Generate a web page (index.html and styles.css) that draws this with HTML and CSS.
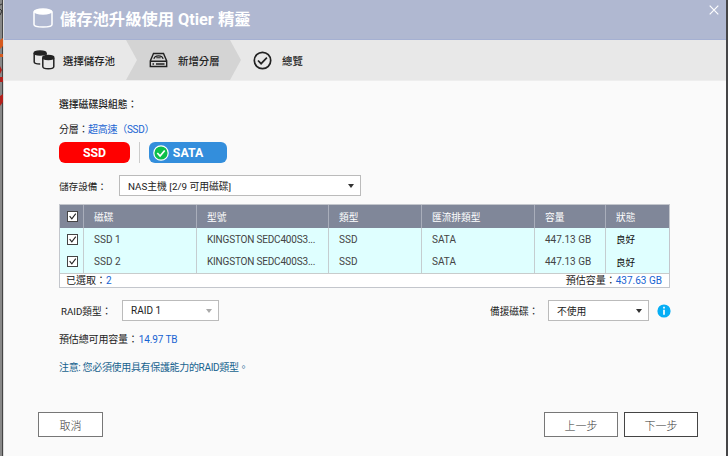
FILE: index.html
```
<!DOCTYPE html>
<html lang="zh-Hant">
<head>
    <meta charset="UTF-8">
    <meta name="viewport" content="width=device-width, initial-scale=1.0">
    <title>儲存池升級使用 Qtier 精靈</title>
    <link rel="stylesheet" href="styles.css">
</head>
<body>
<div class="backdrop">
    <svg class="backdrop-left" width="4" height="456" viewBox="0 0 4 456">
        <path d="M0 5 L2 4 M0 9 L2 11 L0 15" stroke="#333" fill="none"/>
        <path d="M0 40 L3 38 V46 L0 49z M0 54h3v3h-3z" fill="#d65a1e"/>
        <path d="M0 66 L2 70 L0 74z M0 77h3v5h-3z M0 96 L3 94 V102 L0 106z" fill="#b3201c"/>
    </svg>
    <div class="dialog">
        <header class="titlebar">
            <svg class="title-icon" width="22" height="22" viewBox="0 0 22 22">
                <path d="M2 4.500V17.500C2 19 6 20 11 20S20 19 20 17.500V4.500" fill="none" stroke="#fff" stroke-width="1.500"/>
                <ellipse cx="11" cy="4.500" rx="9.500" ry="3.200" fill="#fff"/>
            </svg>
            <h1>儲存池升級使用 <span>Qtier</span> 精靈</h1>
            <svg class="close" width="10" height="10" viewBox="0 0 10 10">
                <path d="M.7.7l8.600 8.600M9.300.7L.7 9.300" stroke="#fff" stroke-width="1.200"/>
            </svg>
        </header>

        <nav class="steps">
            <div class="step first">
                <svg width="22" height="20" viewBox="0 0 22 20" fill="none" stroke="#222" stroke-width="1.500">
                    <path d="M1.200 3v9c0 1.500 2.500 2 6 2M13 3v3"/>
                    <ellipse cx="7.100" cy="3" rx="5.900" ry="1.900" fill="#222"/>
                    <path d="M9.800 8v8.500c0 1.500 2 2.300 5.500 2.300s5.500-.8 5.500-2.300V8"/>
                    <ellipse cx="15.300" cy="7.500" rx="5.500" ry="1.900" fill="#222"/>
                </svg>
                <span>選擇儲存池</span>
            </div>
            <div class="step current">
                <svg width="19" height="16" viewBox="0 0 19 16" fill="none" stroke="#222" stroke-width="1.400">
                    <path d="M4.500 1.500h10L17.700 9v5.500H1.300V9zM1.300 9.300h16.400"/>
                    <path d="M5 7c.3-4.200 8.700-4.200 9 0M7.300 5.800h4.400" stroke-width="1.100"/>
                    <path d="M3.500 12h1.500M7 12h8.500"/>
                </svg>
                <span>新增分層</span>
            </div>
            <div class="step last">
                <svg width="19" height="19" viewBox="0 0 19 19" fill="none" stroke="#222" stroke-width="1.700">
                    <circle cx="9.500" cy="9.500" r="8.200"/>
                    <path d="M5 9.500l3.100 3.200 5.800-6"/>
                </svg>
                <span>總覽</span>
            </div>
        </nav>

        <main class="content">
            <h2>選擇磁碟與組態：</h2>
            <p class="tier">分層：<span class="blue">超高速（SSD）</span></p>

            <div class="tiers">
                <button class="pill ssd">SSD</button>
                <span class="divider"></span>
                <button class="pill sata">
                    <svg width="16" height="16" viewBox="0 0 16 16">
                        <circle cx="8" cy="8" r="7.200" fill="#0bbf4a" stroke="#fff" stroke-width="1.200"/>
                        <path d="M4.300 8l2.800 3 4.600-5.500" fill="none" stroke="#fff" stroke-width="1.700"/>
                    </svg>
                    <span>SATA</span>
                </button>
            </div>

            <div class="row device">
                <label>儲存設備：</label>
                <div class="select wide"><span>NAS主機 [2/9 可用磁碟]</span><i class="arrow"></i></div>
            </div>

            <div class="disks">
                <div class="disk-row head">
                    <div><svg class="check" viewBox="0 0 11 11"><path d="M2 5l2.700 3.400L9.500 2"/></svg></div>
                    <div>磁碟</div>
                    <div>型號</div>
                    <div>類型</div>
                    <div>匯流排類型</div>
                    <div>容量</div>
                    <div>狀態</div>
                </div>
                <div class="disk-row">
                    <div><svg class="check" viewBox="0 0 11 11"><path d="M2 5l2.700 3.400L9.500 2"/></svg></div>
                    <div>SSD 1</div>
                    <div class="model">KINGSTON SEDC400S3...</div>
                    <div>SSD</div>
                    <div>SATA</div>
                    <div>447.13 GB</div>
                    <div class="status">良好</div>
                </div>
                <div class="disk-row">
                    <div><svg class="check" viewBox="0 0 11 11"><path d="M2 5l2.700 3.400L9.500 2"/></svg></div>
                    <div>SSD 2</div>
                    <div class="model">KINGSTON SEDC400S3...</div>
                    <div>SSD</div>
                    <div>SATA</div>
                    <div>447.13 GB</div>
                    <div class="status">良好</div>
                </div>
                <div class="summary">
                    <span>已選取：<b class="blue">2</b></span>
                    <span>預估容量：<b class="blue">437.63 GB</b></span>
                </div>
            </div>

            <div class="row options">
                <label class="raid">RAID類型：</label>
                <div class="select small"><span>RAID 1</span><i class="arrow disabled"></i></div>
                <label class="spare">備援磁碟：</label>
                <div class="select medium"><span>不使用</span><i class="arrow"></i></div>
                <svg class="info" width="14" height="14" viewBox="0 0 14 14">
                    <circle cx="7" cy="7" r="6.600" fill="#06aef5"/>
                    <path d="M7 2.800v1.700M7 5.700v5" stroke="#fff" stroke-width="1.700"/>
                </svg>
            </div>

            <p class="total">預估總可用容量：<b class="blue">14.97 TB</b></p>
            <p class="note">注意: 您必須使用具有保護能力的RAID類型。</p>
        </main>

        <footer class="actions">
            <button class="cancel">取消</button>
            <button>上一步</button>
            <button class="next">下一步</button>
        </footer>
    </div>
</div>
</body>
</html>
```
FILE: styles.css
```
* {
    box-sizing: border-box;
}

body {
    margin: 0;
    font-family: Roboto, "Noto Sans CJK TC", sans-serif;
    font-size: 10px;
    color: #222;
}

h1, h2, p {
    margin: 0;
}

svg {
    display: block;
    flex: none;
}

button {
    font-family: inherit;
    padding: 0;
}

.backdrop {
    display: flex;
    width: 728px;
    height: 456px;
    overflow: hidden;
    background-color: #454547;
}

.backdrop-left {
    background: linear-gradient(to right, #888 2px, #444 2px, #444 3px, #ddd 3px);
}

.dialog {
    display: flex;
    flex-direction: column;
    width: 722px;
    background-color: #fafafa;
}

/* title */
.titlebar {
    display: flex;
    height: 40px;
    padding-left: 28px;
    background-color: #b0b8d1;
    border-bottom: 1px solid #a5b0d2;
}

.title-icon {
    margin-top: 7px;
}

.titlebar h1 {
    margin-left: 6px;
    color: #fff;
    font-size: 16.3px;
    line-height: 40px;
    font-weight: bold;
    white-space: nowrap;
}

.close {
    margin: 5px 7px 0 auto;
}

/* wizard steps */
.steps {
    display: flex;
    height: 41px;
    background-color: #e8e8e8;
    border-bottom: 1px solid #eee;
    font-size: 10.4px;
    font-weight: 500;
}

.step {
    display: flex;
    align-items: center;
}

.first {
    width: 122px;
    padding-left: 29px;
    gap: 8px;
}

.current {
    width: 115px;
    padding-left: 23px;
    gap: 10px;
    background-color: #d4d4d4;
    clip-path: polygon(0 0, 104px 0, 100% 50%, 104px 100%, 0 100%, 11px 50%);
}

.last {
    padding-left: 12px;
    gap: 10px;
}

/* form */
.content {
    flex: 1;
    padding: 17px 0 0 55px;
}

.content h2 {
    font-size: 9.8px;
    line-height: 14px;
    font-weight: 500;
}

.tier {
    margin-top: 11px;
    font-size: 10px;
    letter-spacing: -0.3px;
    line-height: 14px;
}

.blue {
    color: #1763d2;
    font-weight: normal;
}

.tiers {
    display: flex;
    margin-top: 5px;
    height: 21px;
}

.pill {
    display: flex;
    align-items: center;
    justify-content: center;
    height: 21px;
    border: 0;
    border-radius: 6px;
    color: #fff;
    font-size: 12.3px;
    font-weight: bold;
}

.ssd {
    width: 71px;
    background-color: #f00;
}

.sata {
    width: 78px;
    gap: 4px;
    padding-right: 20px;
    background-color: #338edc;
}

.divider {
    width: 1px;
    margin: 0 9px;
    background-color: #ccc;
}

.row {
    display: flex;
    align-items: center;
    height: 21px;
}

.device {
    margin-top: 12px;
}

.device label {
    width: 60px;
    flex: none;
    font-size: 9.6px;
}

.select {
    display: flex;
    align-items: center;
    justify-content: space-between;
    height: 21px;
    padding: 0 6px 0 8px;
    border: 1px solid #bbb;
    background-color: #fff;
}

.wide {
    width: 242px;
    font-size: 9.8px;
}

.small {
    width: 97px;
}

.medium {
    width: 101px;
    font-size: 9.8px;
}

.arrow {
    border: 3.5px solid transparent;
    border-top: 4.5px solid #333;
    border-bottom: 0;
}

.arrow.disabled {
    border-top-color: #aaa;
}

/* disk table */
.disks {
    width: 611px;
    height: 84px;
    margin-top: 8px;
    border: 1px solid #c3c6cc;
    background-color: #fff;
}

.disk-row {
    display: grid;
    grid-template-columns: 24px 113px 132px 93px 113px 71px 1fr;
    height: 22.5px;
    background-color: #dfffff;
    color: #444;
}

.disk-row > div {
    display: flex;
    align-items: center;
    padding-left: 10px;
    border-right: 1px solid #c5cdd0;
    white-space: nowrap;
}

.disk-row > div:first-child {
    padding-left: 7px;
}

.disk-row > div:last-child {
    border-right: 0;
}

.disk-row.head {
    height: 23px;
    background-color: #808799;
    color: #fff;
    font-size: 9.7px;
}

.head > div {
    border-right-color: #a9aebb;
}

.disk-row .model {
    letter-spacing: -0.19px;
}

.disk-row .status {
    color: #111;
    font-size: 9.6px;
}

.check {
    width: 11px;
    height: 11px;
    border: 1px solid #444;
    background-color: #fff;
    fill: none;
    stroke: #222;
    stroke-width: 1.3;
}

.summary {
    display: flex;
    justify-content: space-between;
    height: 14px;
    padding: 0 7px 0 6px;
    border-top: 1px solid #c8cccc;
    line-height: 14px;
}

.options {
    margin-top: 12px;
}

.options label {
    flex: none;
    font-size: 9.7px;
}

.raid {
    width: 63px;
    padding-left: 2px;
}

.spare {
    width: 58px;
    margin-left: 271px;
}

.info {
    margin-left: 8px;
}

.total {
    margin-top: 12px;
    font-size: 10px;
    letter-spacing: -0.15px;
    line-height: 14px;
}

.total .blue {
    margin-left: 1px;
}

.note {
    margin-top: 14px;
    font-size: 10px;
    letter-spacing: -0.33px;
    line-height: 14px;
    color: #17638f;
}

/* buttons */
.actions {
    display: flex;
    gap: 6px;
    height: 44px;
    padding: 0 28px 0 34px;
}

.actions button {
    width: 74px;
    height: 25px;
    border: 1px solid #777;
    background-color: #fff;
    color: #333;
    font-size: 11px;
    font-weight: 300;
}

.actions .cancel {
    width: 65px;
    margin-right: auto;
}

.actions .next {
    border-color: #444;
}
```
